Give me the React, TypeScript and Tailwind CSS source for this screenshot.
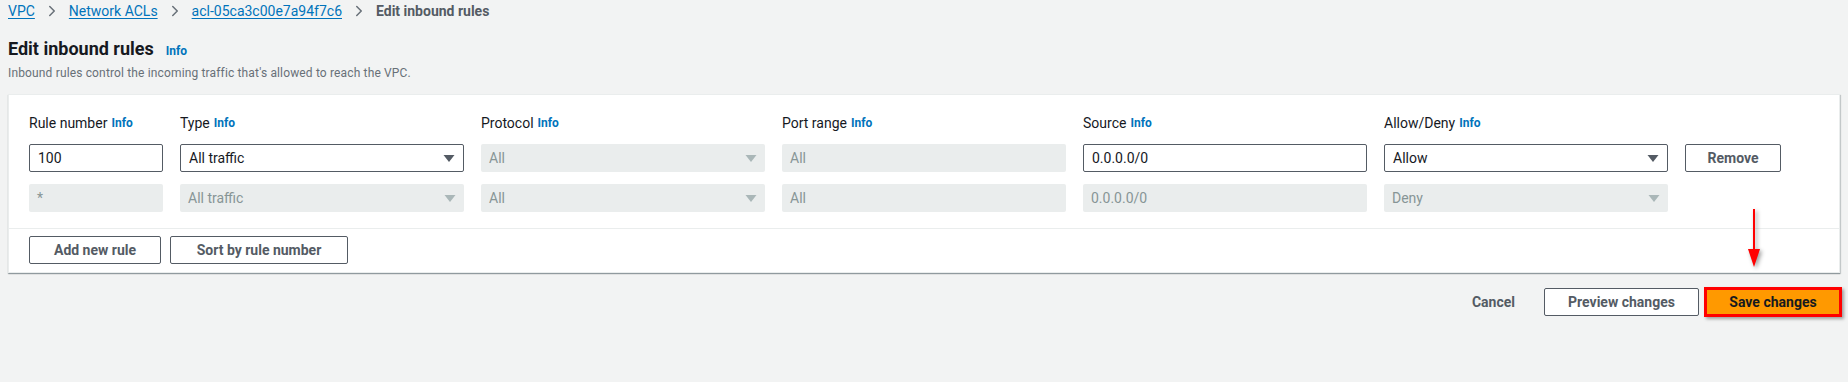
import { FiChevronRight } from 'react-icons/fi'

const font = { fontFamily: 'Roboto, "Liberation Sans", sans-serif' }

function Info() {
	return <span className="ml-1 text-[12px] font-bold text-[#0073bb]">Info</span>
}

function Caret({ disabled }: { disabled?: boolean }) {
	return (
		<svg width="12" height="9" viewBox="0 0 12 9" className="shrink-0">
			<path d="M0.5 1 L11.5 1 L6 8 Z" fill={disabled ? '#aab7b8' : '#545b64'} />
		</svg>
	)
}

function Field({ value, disabled, select }: { value: string; disabled?: boolean; select?: boolean }) {
	return (
		<div
			className={
				'flex h-[28px] items-center justify-between rounded-[2px] px-[8px] text-[14px] ' +
				(disabled
					? 'bg-[#eaeded] text-[#879596]'
					: 'border border-[#545b64] bg-white text-[#16191f]')
			}
		>
			<span>{value}</span>
			{select && <Caret disabled={disabled} />}
		</div>
	)
}

function Btn({ children, className = '' }: { children: React.ReactNode; className?: string }) {
	return (
		<button
			className={
				'flex h-[28px] items-center justify-center rounded-[2px] border border-[#545b64] bg-white text-[14px] font-bold text-[#545b64] ' +
				className
			}
		>
			{children}
		</button>
	)
}

export default function App() {
	const labels = ['Rule number', 'Type', 'Protocol', 'Port range', 'Source', 'Allow/Deny']

	return (
		<div className="h-[382px] w-[1848px] bg-[#f2f3f3] text-[#16191f]" style={font}>

			{/* Хлебные крошки */}
			<div className="flex h-[22px] items-center pl-[8px] text-[14px]">
				<span className="text-[#0073bb] underline underline-offset-2">VPC</span>
				<FiChevronRight size={18} className="mx-[8px] text-[#687078]" />
				<span className="text-[#0073bb] underline underline-offset-2">Network ACLs</span>
				<FiChevronRight size={18} className="mx-[8px] text-[#687078]" />
				<span className="text-[#0073bb] underline underline-offset-2">acl-05ca3c00e7a94f7c6</span>
				<FiChevronRight size={18} className="mx-[8px] text-[#687078]" />
				<span className="font-bold text-[#545b64]">Edit inbound rules</span>
			</div>

			{/* Заголовок */}
			<div className="mt-[16px] pl-[8px]">
				<h1 className="flex items-baseline text-[18px] leading-[22px] font-bold">
					Edit inbound rules
					<span className="ml-[12px] text-[12px] font-bold text-[#0073bb]">Info</span>
				</h1>
				<p className="mt-[3px] text-[12px] leading-[16px] tracking-[0.15px] text-[#687078]">
					Inbound rules control the incoming traffic that's allowed to reach the VPC.
				</p>
			</div>

			{/* Таблица правил */}
			<div className="mx-[8px] mt-[13px] border border-[#eaeded] bg-white shadow-[0_1px_1px_0_rgba(0,28,36,0.3),1px_1px_1px_0_rgba(0,28,36,0.15)]">
				<div className="px-[20px] pt-[18px] pb-[16px]">
					<div className="grid grid-cols-[134px_284px_284px_284px_284px_284px_96px] gap-x-[17px] gap-y-[12px]">
						{labels.map(l => (
							<div key={l} className="-mb-[1px] flex h-[20px] items-center text-[14px]">
								{l}
								<Info />
							</div>
						))}
						<div />

						<Field value="100" />
						<Field value="All traffic" select />
						<Field value="All" select disabled />
						<Field value="All" disabled />
						<Field value="0.0.0.0/0" />
						<Field value="Allow" select />
						<Btn>Remove</Btn>

						<Field value="*" disabled />
						<Field value="All traffic" select disabled />
						<Field value="All" select disabled />
						<Field value="All" disabled />
						<Field value="0.0.0.0/0" disabled />
						<Field value="Deny" select disabled />
						<div />
					</div>
				</div>
				<div className="flex gap-[9px] border-t border-[#eaeded] px-[20px] pt-[7px] pb-[8px]">
					<Btn className="w-[132px]">Add new rule</Btn>
					<Btn className="w-[178px]">Sort by rule number</Btn>
				</div>
			</div>

			{/* Действия */}
			<div className="mt-[14px] flex items-center justify-end pr-[6px]">
				<span className="mr-[29px] text-[14px] font-bold text-[#545b64]">Cancel</span>
				<Btn className="mr-[5px] w-[155px]">Preview changes</Btn>
				<div className="relative border-[3px] border-[#ff0000] shadow-[2px_2px_3px_rgba(0,0,0,0.35)]">
					<button className="flex h-[24px] w-[132px] items-center justify-center bg-[#ff9900] text-[14px] font-bold text-[#16191f]">
						Save changes
					</button>
				</div>
			</div>

			{/* Стрелка */}
			<svg
				width="20"
				height="62"
				viewBox="0 0 20 62"
				className="absolute top-[207px] left-[1744px] drop-shadow-[2px_2px_2px_rgba(0,0,0,0.4)]"
			>
				<line x1="10" y1="2" x2="10" y2="44" stroke="#ff0000" strokeWidth="2" />
				<path d="M4 42 L16 42 L10 60 Z" fill="#ff0000" />
			</svg>
		</div>
	)
}
